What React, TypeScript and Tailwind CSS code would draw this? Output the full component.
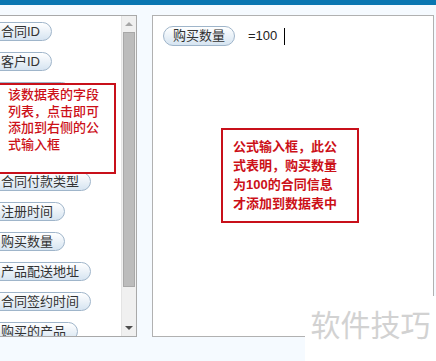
import React from "react";

const FONT = '"Liberation Sans", "Noto Sans CJK SC", sans-serif';

// hidden entries sit behind the annotation box; only their outline peeks out
const fields: { label: string; w?: number }[] = [
  { label: "合同ID" },
  { label: "客户ID" },
  { label: "", w: 84 },
  { label: "", w: 72 },
  { label: "", w: 72 },
  { label: "合同付款类型" },
  { label: "注册时间" },
  { label: "购买数量" },
  { label: "产品配送地址" },
  { label: "合同签约时间" },
  { label: "购买的产品" },
];

function Pill({ label, w }: { label: string; w?: number }) {
  return (
    <div
      className="h-[19px] shrink-0 rounded-full border border-[#9fb5ca] bg-gradient-to-b from-white to-[#d6e4f1] pl-[13px] pr-[11px] text-[13px] leading-[17px] text-[#333] whitespace-nowrap"
      style={w ? { width: w } : undefined}
    >
      {label}
    </div>
  );
}

export default function App() {
  return (
    <div
      className="relative w-[436px] h-[361px] overflow-hidden bg-[#f5faff]"
      style={{ fontFamily: FONT }}
    >
      <div className="h-[5px] bg-[#0a76b1]" />
      <div className="flex pt-[10px]">
        {/* field list */}
        <div className="relative -ml-[2px] w-[139px] h-[322px] border border-[#a9a9a9] bg-white flex overflow-hidden">
          <div className="flex-1 flex flex-col items-start gap-[11px] pt-[6px] -ml-[12px] overflow-hidden">
            {fields.map((f, i) => (
              <Pill key={i} label={f.label} w={f.w} />
            ))}
          </div>
          <div className="w-[15px] h-full bg-[#f0f0f0] flex flex-col items-center border-l border-[#e4e4e4]">
            <div className="h-[16px] flex items-center justify-center">
              <div className="w-0 h-0 border-l-[4px] border-r-[4px] border-b-[4px] border-l-transparent border-r-transparent border-b-[#a6a6a6]" />
            </div>
            <div className="w-[12px] h-[255px] bg-[#bcbcbc] border border-[#a8a8a8]" />
            <div className="flex-1" />
            <div className="h-[16px] flex items-center justify-center">
              <div className="w-0 h-0 border-l-[4px] border-r-[4px] border-t-[4px] border-l-transparent border-r-transparent border-t-[#4d4d4d]" />
            </div>
          </div>
        </div>

        {/* formula box */}
        <div className="ml-[15px] w-[282px] h-[322px] border border-[#b1b1b1] bg-white pl-[10px] pt-[10px]">
          <div className="flex items-center">
            <div className="h-[20px] rounded-full border border-[#9fb5ca] bg-gradient-to-b from-white to-[#d6e4f1] px-[9px] text-[13px] leading-[18px] text-[#333]">
              购买数量
            </div>
            <span className="ml-[13px] text-[13px] text-[#222]">=100</span>
            <span className="ml-[7px] w-px h-[17px] bg-black" />
          </div>
        </div>
      </div>

      {/* annotation: left */}
      <div className="absolute left-[-2px] top-[83px] w-[118px] h-[91px] border-2 border-[#c8101a] bg-white pl-[8px] pt-[2px] text-[13px] leading-[16.5px] font-medium text-[#cc1018]">
        该数据表的字段
        <br />
        列表，点击即可
        <br />
        添加到右侧的公
        <br />
        式输入框
      </div>

      {/* annotation: right */}
      <div className="absolute left-[221px] top-[128px] w-[138px] h-[95px] border-2 border-[#c8101a] bg-white pl-[10px] pt-[7px] text-[13px] leading-[19px] font-bold text-[#cc1018]">
        公式输入框，此公
        <br />
        式表明，购买数量
        <br />
        为100的合同信息
        <br />
        才添加到数据表中
      </div>

      {/* watermark */}
      <div className="absolute left-[305px] top-[296px] w-[131px] h-[65px] bg-white flex items-start justify-center pt-[13px]">
        <span className="text-[30px] leading-[34px] text-[#d2d2d2]">
          软件技巧
        </span>
      </div>
    </div>
  );
}
